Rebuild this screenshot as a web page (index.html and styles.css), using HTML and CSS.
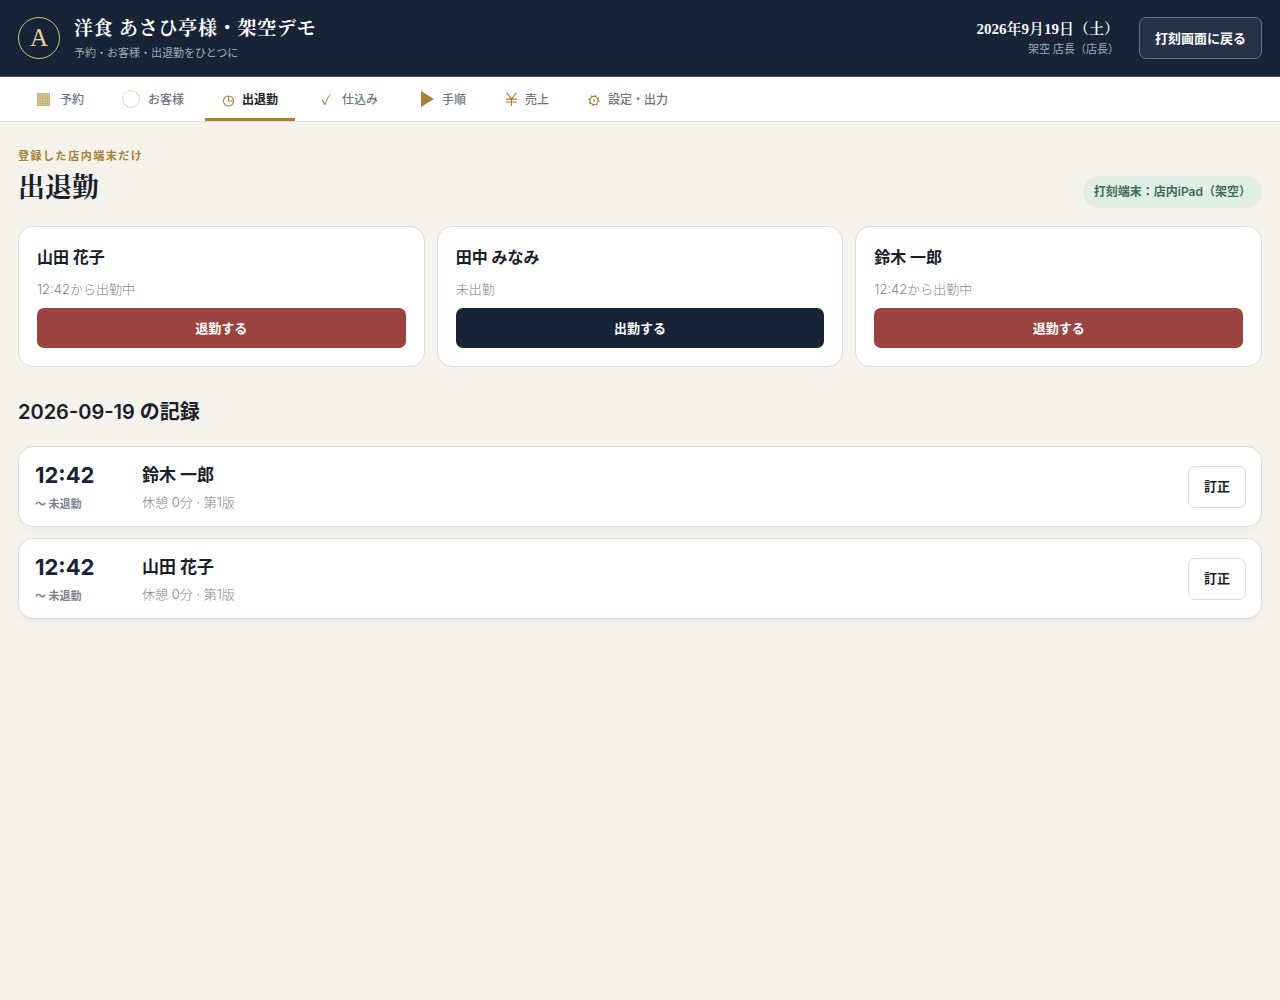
FILE: index.html
```html
<!DOCTYPE html>
<html lang="ja">

<head>
  <meta charset="UTF-8" />
  <meta name="viewport" content="width=device-width, initial-scale=1.0" />
  <title>出退勤 | 洋食 あさひ亭様</title>
  <link rel="stylesheet" href="styles.css">
</head>

<body>
  <header class="header">
    <div class="logo">A</div>
    <div class="brand">
      <p class="brand-name">洋食 あさひ亭様・架空デモ</p>
      <p class="brand-sub">予約・お客様・出退勤をひとつに</p>
    </div>
    <div class="today">
      <p class="today-date">2026年9月19日（土）</p>
      <p class="today-user">架空 店長（店長）</p>
    </div>
    <button class="button button-header" type="button">打刻画面に戻る</button>
  </header>

  <nav class="tabs">
    <a class="tab" href="#yoyaku">
      <svg width="15" height="18" viewBox="0 0 15 18">
        <rect x="0" y="3" width="13" height="13" fill="#dcc89d" />
        <path d="M0 3.500h13M0 6h13M0 8.500h13M0 11h13M0 13.500h13M0 15.500h13M.5 3v13M3 3v13M5.500 3v13M8 3v13M10.500 3v13M12.500 3v13" stroke="#bd9f60" stroke-width=".5" />
      </svg>
      予約
    </a>
    <a class="tab" href="#okyaku">
      <svg width="18" height="18" viewBox="0 0 18 18">
        <circle cx="9" cy="9" r="8.300" fill="none" stroke="#b99a55" stroke-width=".8" stroke-dasharray="1 1" />
      </svg>
      お客様
    </a>
    <a class="tab active" href="#kintai">
      <svg width="12" height="18" viewBox="0 0 12 18">
        <circle cx="6.500" cy="11" r="5" fill="none" stroke="#a58235" stroke-width="1.100" />
        <path d="M6.500 6v5h5" fill="none" stroke="#a58235" stroke-width="1.100" />
      </svg>
      出退勤
    </a>
    <a class="tab" href="#shikomi">
      <svg width="18" height="18" viewBox="0 0 18 18">
        <path d="M5.500 9.800l.9-.5 2.500 4C10.300 9.600 12.200 6 14.600 3.400l.5.300C12.600 7 10.600 11 9.400 15h-.9z" fill="#a58235" />
      </svg>
      仕込み
    </a>
    <a class="tab" href="#tejun">
      <svg width="18" height="18" viewBox="0 0 18 18">
        <path d="M5 1l13 8L5 17z" fill="#a58235" />
      </svg>
      手順
    </a>
    <a class="tab" href="#uriage">
      <svg width="13" height="18" viewBox="0 0 13 18">
        <path d="M2.500 2.500L7.500 9l5-6.500M7.500 9v7M2 9.200h11M2 12h11" fill="none" stroke="#a58235" stroke-width="1.200" />
      </svg>
      売上
    </a>
    <a class="tab" href="#settei">
      <svg width="13" height="18" viewBox="0 0 13 18">
        <circle cx="7" cy="10.500" r="4.100" fill="none" stroke="#a58235" stroke-width="1.200" />
        <circle cx="7" cy="10.500" r="5" fill="none" stroke="#a58235" stroke-width="1.300" stroke-dasharray="1.500 2.427" />
        <circle cx="7" cy="10.500" r="1" fill="#a58235" />
      </svg>
      設定・出力
    </a>
  </nav>

  <main class="page">
    <div class="page-head">
      <div>
        <p class="eyebrow">登録した店内端末だけ</p>
        <h1>出退勤</h1>
      </div>
      <span class="badge">打刻端末：店内iPad（架空）</span>
    </div>

    <section class="staff">
      <article class="card">
        <h3>山田 花子</h3>
        <p>12:42から出勤中</p>
        <button class="button button-out" type="button">退勤する</button>
      </article>
      <article class="card">
        <h3>田中 みなみ</h3>
        <p>未出勤</p>
        <button class="button button-in" type="button">出勤する</button>
      </article>
      <article class="card">
        <h3>鈴木 一郎</h3>
        <p>12:42から出勤中</p>
        <button class="button button-out" type="button">退勤する</button>
      </article>
    </section>

    <h2>2026-09-19 の記録</h2>

    <section class="records">
      <article class="record">
        <div class="record-time">
          <strong>12:42</strong>
          <small>〜 未退勤</small>
        </div>
        <div class="record-body">
          <h3>鈴木 一郎</h3>
          <p>休憩 0分 · 第1版</p>
        </div>
        <button class="button button-edit" type="button">訂正</button>
      </article>
      <article class="record">
        <div class="record-time">
          <strong>12:42</strong>
          <small>〜 未退勤</small>
        </div>
        <div class="record-body">
          <h3>山田 花子</h3>
          <p>休憩 0分 · 第1版</p>
        </div>
        <button class="button button-edit" type="button">訂正</button>
      </article>
    </section>
  </main>
</body>

</html>
```
FILE: styles.css
```css
:root {
  --navy: #172337;
  --ink: #172029;
  --gold: #a58235;
  --muted: #7c8591;
  --line: #dedcd7;
  --sans: Inter, "Noto Sans CJK JP", sans-serif;
  --serif: "Liberation Serif", "Noto Serif CJK JP", "Noto Sans CJK JP", serif;
}

* {
  box-sizing: border-box;
  margin: 0;
  padding: 0;
}

body {
  min-height: 100vh;
  background: #f6f2ec;
  color: var(--ink);
  font-family: var(--sans);
}

/* ヘッダー */
.header {
  display: flex;
  align-items: center;
  height: 77px;
  padding: 0 18px;
  border-bottom: 1px solid #4b5565;
  background: var(--navy);
  color: #fff;
}

.logo {
  display: flex;
  align-items: center;
  justify-content: center;
  width: 42px;
  height: 42px;
  margin-right: 14px;
  border: 1px solid #d5c18d;
  border-radius: 50%;
  color: #e2cf9c;
  font-family: var(--serif);
  font-size: 25px;
}

.brand,
.today {
  padding-top: 2px;
}

.brand-name {
  font-family: var(--serif);
  font-size: 19px;
  font-weight: 700;
  letter-spacing: .04em;
  line-height: 28px;
}

.brand-sub,
.today-user {
  color: #a3aab5;
  font-size: 11px;
  line-height: 20px;
}

.today {
  margin-left: auto;
  margin-right: 20px;
  text-align: right;
}

.today-date {
  font-family: var(--serif);
  font-size: 15px;
  font-weight: 600;
  line-height: 20px;
}

.button {
  padding: 0 15px 2px;
  border: 1px solid transparent;
  border-radius: 7px;
  font-family: var(--sans);
  font-size: 13px;
  font-weight: 700;
  cursor: pointer;
}

.button-header {
  height: 42px;
  border-color: #697385;
  background: #273248;
  color: #fff;
}

/* タブ */
.tabs {
  display: flex;
  gap: 4px;
  height: 45px;
  padding: 0 20px;
  border-bottom: 1px solid var(--line);
  background: #fff;
}

.tab {
  display: flex;
  align-items: center;
  gap: 8px;
  padding: 2px 17px 0;
  border-bottom: 3px solid transparent;
  color: #6c7683;
  font-size: 12px;
  font-weight: 500;
  text-decoration: none;
  white-space: nowrap;
}

.tab.active {
  border-bottom-color: var(--gold);
  color: var(--ink);
  font-weight: 700;
}

/* 本文 */
.page {
  padding: 25px 18px;
}

.page-head {
  display: flex;
  align-items: flex-end;
  justify-content: space-between;
  margin-bottom: 18px;
}

.eyebrow {
  color: var(--gold);
  font-size: 11px;
  font-weight: 700;
  letter-spacing: .14em;
  line-height: 18px;
}

h1 {
  margin-top: 4px;
  font-family: var(--serif);
  font-size: 27px;
  font-weight: 700;
  line-height: 39px;
}

.badge {
  padding: 0 11px;
  border-radius: 16px;
  background: #e1eee6;
  color: #3f6b57;
  font-size: 12px;
  font-weight: 600;
  line-height: 32px;
}

.staff {
  display: grid;
  grid-template-columns: repeat(3, 1fr);
  gap: 12px;
}

.card,
.record {
  border: 1px solid var(--line);
  border-radius: 15px;
  background: #fff;
}

.card {
  padding: 18px;
}

.card h3 {
  font-size: 16px;
  line-height: 24px;
}

.card p,
.record-body p {
  color: var(--muted);
  font-size: 13px;
  font-weight: 300;
  line-height: 20px;
}

.card p {
  margin: 10px 0 9px;
}

.card .button {
  display: block;
  width: 100%;
  height: 40px;
  color: #fff;
}

.button-out {
  background: #9b4340;
}

.button-in {
  background: var(--navy);
}

h2 {
  margin: 30px 0 19px;
  font-size: 20px;
  font-weight: 600;
  line-height: 30px;
}

/* 打刻の記録 */
.records {
  display: grid;
  gap: 11px;
}

.record {
  display: grid;
  grid-template-columns: 93px 1fr auto;
  align-items: center;
  gap: 14px;
  min-height: 81px;
  padding: 12px 15px 12px 16px;
  box-shadow: 0 2px 6px rgba(23, 35, 55, .04);
}

.record-time strong,
.record-time small {
  display: block;
}

.record-time strong {
  color: var(--navy);
  font-size: 22px;
  line-height: 30px;
}

.record-time small {
  margin-top: 4px;
  color: #7b838f;
  font-size: 11px;
  font-weight: 700;
  line-height: 20px;
}

.record-body h3 {
  font-size: 17px;
  line-height: 26px;
}

.record-body p {
  margin-top: 4px;
}

.button-edit {
  height: 42px;
  border-color: var(--line);
  background: #fff;
  color: var(--ink);
}
```
